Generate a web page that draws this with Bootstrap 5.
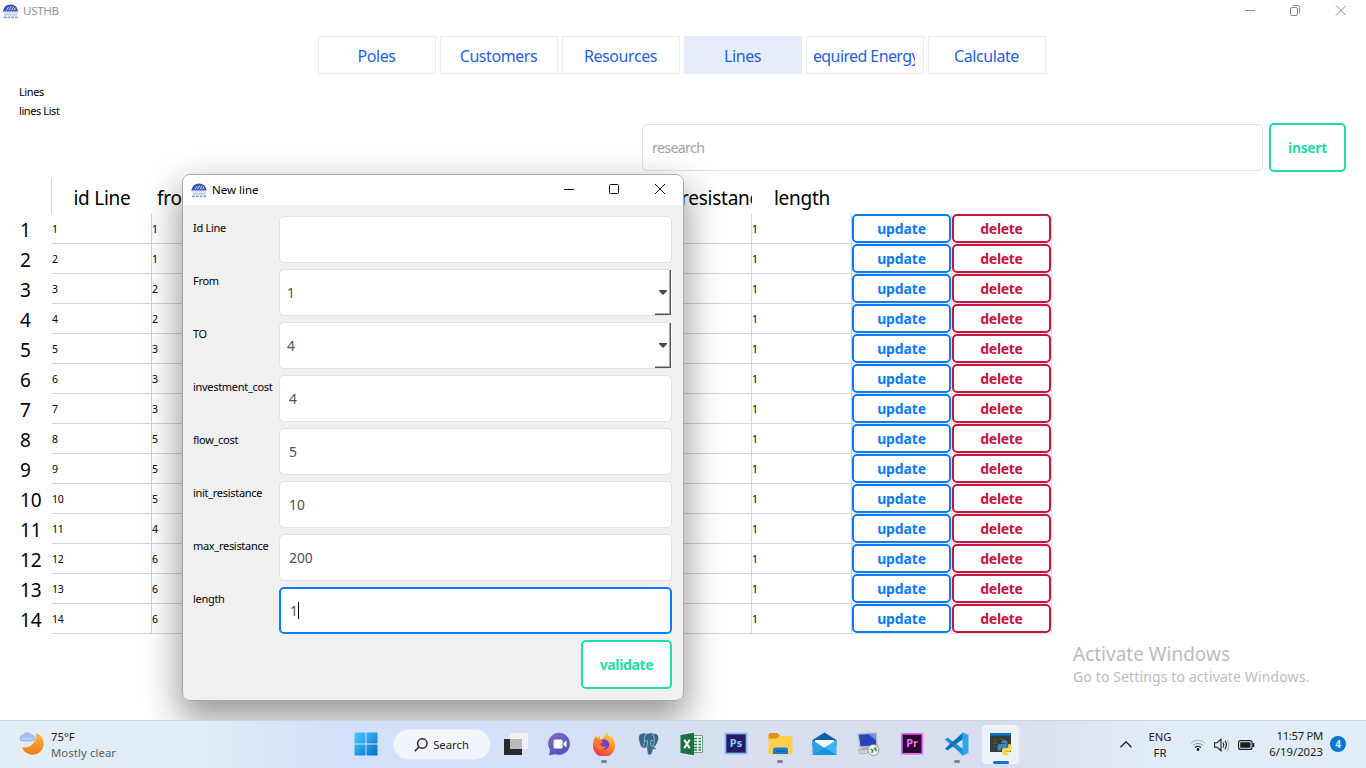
<!DOCTYPE html>
<html lang="en">
<head>
<meta charset="utf-8">
<title>USTHB</title>
<link href="https://cdn.jsdelivr.net/npm/bootstrap@5.3.0/dist/css/bootstrap.min.css" rel="stylesheet">
<style>
  body { width:1366px; height:768px; overflow:hidden; background:#fff; color:#000; font-family:"Noto Sans","Open Sans",sans-serif; font-size:11px; line-height:1.2; }
  svg { display:block; flex:none; }
  .app-title { height:22px; padding:0 20px 0 2px; color:#929292; font-size:11.6px; }
  .app-title span { letter-spacing:-.35px; }
  .tabs { gap:4px; margin-top:14px; padding-left:318px; }
  .tab-btn { width:118px; height:38px; padding:1px 8px 0 7px; border:1px solid #e5edfa; border-radius:0; color:#1f5fe0; font-size:16px; line-height:36px; background:#fff; }
  .tab-btn span { display:flex; justify-content:center; overflow:hidden; white-space:nowrap; letter-spacing:-.43px; }
  .tab-btn span.long { justify-content:flex-end; letter-spacing:-.6px; padding-right:0; }
  .tab-btn span.long b { font-weight:400; margin-right:-4px; }
  .tab-btn.active { background:#e5edfa; border-color:#e5edfa; color:#1f5fe0; }
  .crumbs { height:47px; padding:8px 0 0 19px; line-height:19px; font-size:11px; letter-spacing:-.42px; }
  .search-row { gap:6px; margin-top:2px; padding-right:20px; }
  .search-box { width:621px; height:47px; border:1px solid #e1e1ea; border-radius:5px; padding:0 9px; font-size:14.3px; letter-spacing:-.7px; color:#a3a3a6; background:#fff; }
  .btn-line { border:2px solid; border-radius:5px; background:#fff; font-weight:700; font-size:14px; padding:0; line-height:1; display:flex; align-items:center; justify-content:center; letter-spacing:-.35px; }
  .btn-green { color:#1edea8; border-color:#1edea8; height:49px; }
  .btn-up, .btn-del { width:99px; height:29px; letter-spacing:-.15px; }
  .btn-up { color:#0a7bff; border-color:#0a7bff; }
  .btn-del { color:#c6163f; border-color:#c6163f; letter-spacing:-.3px; }
  .grid-table { width:1052px; margin-top:6px; display:grid; grid-template-columns:52px repeat(10,100px); }
  .hd { height:36px; padding-top:4px; font-size:19px; letter-spacing:-.25px; display:flex; align-items:center; justify-content:center; overflow:hidden; white-space:nowrap; }
  .hd.corner { border-right:1px solid #d9d9d9; }
  .rh { height:30px; padding:2px 0 0 20px; font-size:19px; display:flex; align-items:center; }
  .td { height:30px; border-right:1px solid #d4d4d4; border-bottom:1px solid #d4d4d4; font-size:10.5px; display:flex; align-items:center; letter-spacing:-.2px; padding-top:1px; }
  .td.act { padding:0; border-color:#e6e0e4; }
  .dialog { position:absolute; left:182px; top:174px; width:502px; height:527px; border:1px solid #a9a9a9; border-radius:8px; background:#f0f0f0; overflow:hidden; }
  .dialog-shadow { position:absolute; left:182px; top:174px; width:502px; height:527px; border-radius:8px; box-shadow:0 16px 36px 3px rgba(0,0,0,.4); }
  .dialog-head { height:30px; background:#fff; padding:0 18px 0 8px; font-size:11.5px; }
  .dialog-head > svg { margin-top:-2px; }
  .form-line { display:grid; grid-template-columns:86px 393px; height:47px; margin-bottom:6px; }
  .form-line label { font-size:11px; letter-spacing:-.3px; padding-top:5px; line-height:14px; white-space:nowrap; }
  .fld { border:1px solid #e1e1ea; border-radius:5px; background:#fff; padding:0 9px; font-size:13.8px; color:#505050; display:flex; align-items:center; }
  .fld span { padding-top:2px; }
  .fld.sel { padding:0 0 0 7px; border-right:0; justify-content:space-between; }
  .drop { width:16px; height:45px; margin-right:1px; border-right:1px solid #555; border-bottom:1px solid #555; box-shadow:inset -1px -1px #aaa; display:flex; align-items:center; justify-content:center; }
  .fld.on { border:2px solid #0a7bff; }
  .caret { width:1px; height:17px; background:#000; }
  .watermark { position:absolute; left:1073px; top:642px; color:#bcbcbc; white-space:nowrap; }
  .watermark .big { font-size:19px; line-height:24px; letter-spacing:0; }
  .watermark .sm { font-size:14px; line-height:21px; letter-spacing:.13px; }
  .taskbar { position:absolute; left:0; top:720px; width:1366px; height:48px; border-top:1px solid #cbd6e0; background:linear-gradient(90deg,#e2edf6 0,#e1ecf7 200px,#d3e0f9 335px,#d4e0f7 560px,#d6dff0 700px,#d8deee 1000px,#dfe6f2 1090px,#e1ecf8 1150px,#e2edf8 100%); color:#1c1c1c; font-size:11.3px; }
  .pill { width:98px; height:31px; border-radius:16px; background:#f2f5fc; border:1px solid #e6ebf6; margin:0 3.5px 0 5px; }
  .tk { width:44.05px; height:47px; padding-bottom:1px; position:relative; display:flex; align-items:center; justify-content:center; }
  .tk.run::after { content:""; position:absolute; bottom:5px; width:6px; height:3px; border-radius:2px; background:#7d828b; }
  .tk.cur::before { content:""; position:absolute; left:3px; top:4px; width:35px; height:39px; background:#edf1f9; border:1px solid #f5f7fb; border-radius:4px; box-shadow:3px 0 0 #e6ebf5; }
  .tk.cur::after { content:""; position:absolute; bottom:4px; left:14px; width:16px; height:3px; border-radius:2px; background:#0078d4; }
  .tk svg { position:relative; }
  .note { width:16px; height:16px; border-radius:50%; background:#0078d4; color:#fff; font-size:10px; font-weight:600; }
</style>
</head>
<body class="position-relative">
<svg width="0" height="0" class="position-absolute">
  <symbol id="logo" viewBox="0 0 16 15">
    <path d="M.3 7.500Q1.500.6 8 .5t7.700 7z" fill="#3454b8"/>
    <path d="M3.800 6.300 6 3.200M6.400 6.300l2.400-4M9.200 6.300l1.800-3.600M11.800 6.300l.9-2.500" stroke="#fff" stroke-width=".8" fill="none"/>
    <path d="M1 9h14M1.500 10.900h13" stroke="#b4c1e4" stroke-width="1.200"/>
    <path d="M1 13.300h3M5 13.300h2.700M8.700 13.300h2.700M12.400 13.300h2.700" stroke="#8ea0d3" stroke-width="1.800"/>
  </symbol>
</svg>

<header class="app-title d-flex align-items-center justify-content-between">
  <div class="d-flex align-items-center gap-1"><svg width="17" height="15"><use href="#logo"/></svg><span>USTHB</span></div>
  <svg width="104" height="12" viewBox="0 0 104 12" fill="none" stroke="#888"><path d="M3 5.500h10"/><rect x="48.500" y="2.500" width="7" height="8" rx="1.500"/><path d="M50.500.5h5q2 0 2 2v6M94 .5l10 10M104 .5l-10 10"/></svg>
</header>

<nav class="tabs d-flex">
  <button class="tab-btn btn"><span>Poles</span></button>
  <button class="tab-btn btn"><span>Customers</span></button>
  <button class="tab-btn btn"><span>Resources</span></button>
  <button class="tab-btn btn active"><span>Lines</span></button>
  <button class="tab-btn btn"><span class="long"><b>Required Energy</b></span></button>
  <button class="tab-btn btn"><span>Calculate</span></button>
</nav>
<div class="crumbs"><div>Lines</div><div>lines List</div></div>

<div class="search-row d-flex justify-content-end align-items-center">
  <div class="search-box d-flex align-items-center">research</div>
  <button class="btn-line btn-green" style="width:77px">insert</button>
</div>

<main class="grid-table" id="lines"></main>

<div class="dialog-shadow"></div>
<section class="dialog">
  <div class="dialog-head d-flex align-items-center justify-content-between">
    <div class="d-flex align-items-center" style="gap:5px"><svg width="16" height="15"><use href="#logo"/></svg><span>New line</span></div>
    <svg width="102" height="12" viewBox="0 0 102 12" fill="none" stroke="#111"><path d="M1 6.500h10"/><rect x="46.500" y="1.500" width="9" height="9" rx="1"/><path d="M92 1l10 10M102 1l-10 10"/></svg>
  </div>
  <div id="form" style="padding:11px 0 0 10px"></div>
  <div class="d-flex justify-content-end" style="padding-right:11px"><button class="btn-line btn-green" style="width:91px">validate</button></div>
</section>

<div class="watermark"><div class="big">Activate Windows</div><div class="sm">Go to Settings to activate Windows.</div></div>

<footer class="taskbar d-flex align-items-center">
  <div class="d-flex align-items-center" style="width:343.500px;padding-left:19px;gap:8px">
    <svg width="25" height="24" viewBox="0 0 25 24" style="margin-top:-3px"><defs><linearGradient id="moon" x2="0" y2="1"><stop stop-color="#f9b947"/><stop offset="1" stop-color="#ed7d16"/></linearGradient></defs>
      <path d="M17 2A11.200 11.200 0 1 1 3 16.500Q11 17 14.500 12q3.500-5 2.500-10z" fill="url(#moon)"/><path d="M4 10a3 3 0 0 1 0-6 5 5 0 0 1 8.500 0 3 3 0 0 1 .5 6z" fill="#a5c1ef" stroke="#8eaee6" stroke-width=".7"/><path d="M3 8h11" stroke="#d2e1fa"/></svg>
    <div style="line-height:16px;margin-left:-1px"><div>75°F</div><div style="color:#5b6066;letter-spacing:.1px">Mostly clear</div></div>
  </div>
  <div class="tk"><svg width="24" height="24" viewBox="0 0 24 24"><defs><linearGradient id="win" x2="1" y2="1"><stop stop-color="#4cc9fa"/><stop offset="1" stop-color="#0070cc"/></linearGradient></defs><path d="M.5.500h11v11H.5zM12.500.500h11v11h-11zM.5 12.500h11v11H.5zM12.500 12.500h11v11h-11z" fill="url(#win)"/></svg></div>
  <div class="pill d-flex align-items-center justify-content-center" style="gap:5px">
    <svg width="14" height="14" viewBox="0 0 14 14" fill="none" stroke="#222" stroke-width="1.500"><circle cx="8.300" cy="5.500" r="4.700"/><path d="M5 9 .8 13.200"/></svg><span>Search</span></div>
  <div class="tk"><svg width="24" height="24" viewBox="0 0 24 24"><path d="M0 7h18v16H0z" fill="#292929"/><path d="M6 1h18v16H6z" fill="#f1f1f1"/><path d="M6 7h12v10H6z" fill="#bababa"/></svg></div>
  <div class="tk"><svg width="24" height="24" viewBox="0 0 24 24"><defs><linearGradient id="chat" x2=".6" y2="1"><stop stop-color="#8d68be"/><stop offset="1" stop-color="#4b52c0"/></linearGradient></defs><path d="M12 .8a11 11 0 1 1-4.500 21.400L1 23.300l1.200-5.200A11 11 0 0 1 12 .8z" fill="url(#chat)"/><rect x="5.500" y="7.500" width="9" height="9" rx="1.500" fill="#fff"/><path d="m15.500 11 3-2.500v7l-3-2.500z" fill="#fff"/></svg></div>
  <div class="tk run"><svg width="24" height="24" viewBox="0 0 24 24"><defs><linearGradient id="fox" x1=".8" x2=".3" y2="1"><stop stop-color="#ffe044"/><stop offset=".45" stop-color="#ff8b24"/><stop offset="1" stop-color="#f62b57"/></linearGradient></defs><path d="M3.500 4 5 6l3-2-.5 3.500 4-1.500Q12 3 15.500.5q.5 3 3 5l.5-1.500Q23.500 8 23 14a11 11 0 0 1-22 0Q.8 8 3.500 4z" fill="url(#fox)"/><circle cx="12.300" cy="12.500" r="5" fill="#7541c9"/><path d="M4 9q4-2 7 1l-3 2q2 4 6 2-2 5-7 3-4-3-3-8z" fill="#ff7a25"/></svg></div>
  <div class="tk"><svg width="24" height="24" viewBox="0 0 24 24"><path d="M5 1.500q3-1.300 6 0 4-1.300 7-.3 5 .2 4.800 5.300-.5 4.500-4 8.500l-.8.300 3 .7q-1 2-4 1.500-.5 5-3 5.700-3 .3-3-5.200l-.3-2.500-2 .8q-3.500.5-5-4.300Q.7 3 5 1.500z" fill="#376990" stroke="#e1e9ef" stroke-width=".7"/><path d="M10 2q-2.500 3-1.500 7l-1 5.500M16 1.500q4 5 1.500 12M9 9h2.500v4q0 2-2 2.500M15 8.500h2.200M15 8.500l-.5 4q.5 2 3 2" fill="none" stroke="#b9cfdd" stroke-width=".7"/></svg></div>
  <div class="tk"><svg width="24" height="24" viewBox="0 0 24 24"><path d="M12 3.500h10.500v17H12z" fill="#f6faf7" stroke="#6f9a80"/><path d="M14 6.500h3M18.500 6.500H21M14 9.500h3M18.500 9.500H21M14 12.500h3M18.500 12.500H21M14 15.500h3M18.500 15.500H21M14 18h3M18.500 18H21" stroke="#287a4a" stroke-width="1.500"/><path d="M.5 3 14 .8v22.400L.5 21z" fill="#1c7044"/><path d="m4.300 7.800 5.400 8.400M9.700 7.800l-5.400 8.400" stroke="#fff" stroke-width="2"/></svg></div>
  <div class="tk"><svg width="24" height="24" viewBox="0 0 24 24"><rect x="1.500" y="1.500" width="21" height="20" fill="#251c66" stroke="#84baf0" stroke-width="1.700"/><text x="12" y="15" text-anchor="middle" font-family="Noto Sans" font-weight="700" font-size="11" fill="#8fc7fb">Ps</text></svg></div>
  <div class="tk run"><svg width="25" height="24" viewBox="0 0 25 24"><path d="M.5 3q0-2 2-2h7l2.500 3v4H.5z" fill="#dc9815"/><path d="M.5 6.500H9L12 4h10.500q2 0 2 2v14.500q0 2-2 2h-20q-2 0-2-2z" fill="#ffd04d"/><path d="M5 22v-4q0-2.500 2.500-2.500h10Q20 15.500 20 18v4z" fill="#127ed0"/><path d="M8 19h9" stroke="#075aa3" stroke-width="1.200"/></svg></div>
  <div class="tk"><svg width="25" height="24" viewBox="0 0 25 24"><path d="M.5 8 12.500.5l12 7.500v6H.5z" fill="#0a61ae"/><path d="M3 8h19v8H3z" fill="#f6f7f9"/><path d="m.5 8 12 8L.5 23z" fill="#2d9fe4"/><path d="m24.500 8-12 7.500L.5 23h24z" fill="#38b6f1"/><path d="m.5 23 12-7.500 12 7.500z" fill="#1795df"/></svg></div>
  <div class="tk"><svg width="24" height="24" viewBox="0 0 24 24"><path d="m2 2 18-1 1 13-17 1z" fill="#2741bb" stroke="#b4bac8" stroke-width="1.500"/><path d="M12 1.800 19.500 1.500l.7 7z" fill="#7890df"/><path d="m8 15 6-.5 1 4-9 1-3-2z" fill="#aeb2bc"/><path d="m2 18 10-1 1 4-9 1z" fill="#ced0d5" stroke="#8f959f" stroke-width=".5"/><circle cx="17.500" cy="18" r="5.500" fill="#eee" stroke="#888" stroke-width=".8"/><path d="m14.500 17 2.300 1.500-1 2.500M20.500 15.500l-2 1.500 2.500 1.700" fill="none" stroke="#319136" stroke-width="1.400"/></svg></div>
  <div class="tk"><svg width="24" height="24" viewBox="0 0 24 24"><rect x="1.800" y="1.800" width="20.500" height="20" fill="#2b062f" stroke="#dd6bf4" stroke-width="1.700"/><text x="12" y="15" text-anchor="middle" font-family="Noto Sans" font-weight="700" font-size="11" fill="#e578fa">Pr</text></svg></div>
  <div class="tk run"><svg width="24" height="24" viewBox="0 0 24 24"><path d="M0 7.500 2.500 5.500 18 17v6.500z" fill="#1d8fd3"/><path d="m0 16.500 2.500 2L18 7V.5z" fill="#0c70b7"/><path d="m17.500.3 6 2.800v17.800l-6 2.800-1.500-1.500 1.500-1.200V3L16 1.800z" fill="#2fa6ec"/></svg></div>
  <div class="tk cur"><svg width="24" height="24" viewBox="0 0 24 24"><path d="M1 2h21v18H1z" fill="#343c3c"/><path d="M1 1h21v2.500H1z" fill="#0878d0"/><path d="M4 8h4M10 7h5M4 11h5M4 14h3" stroke="#41663f"/><path d="M13 8.500q5-1.500 5.500 1.500v4q0 2-2 2h-3q-2 0-2 2.500-3 1-3.200-2.500-.2-4 2.700-4h5v-.8H12z" fill="#4384b9"/><path d="M19.300 12q3.500-.5 3.700 3.500 0 4-2.500 4.300h-4v.8h3.200q.3 2.600-3 2.700-4 0-3.700-2.600v-3q.2-1.700 2-1.700h2.500q2 0 1.800-2z" fill="#ffd64e"/></svg></div>

  <div class="ms-auto d-flex align-items-center" style="padding-right:20px">
    <svg width="12" height="7" viewBox="0 0 12 7" fill="none" stroke="#1c1c1c" stroke-width="1.300"><path d="M.5 6.300 6 .8l5.500 5.500"/></svg>
    <div class="text-center" style="width:24px;margin:0 18px 0 16px;line-height:16px">ENG<br>FR</div>
    <svg width="16" height="12" viewBox="0 0 16 12" fill="none"><path d="M.7 4.300a10.300 10.300 0 0 1 14.600 0" stroke="#aeb6c0"/><path d="M3 6.500a7 7 0 0 1 10 0" stroke="#8f979f"/><path d="M5.200 8.500a4 4 0 0 1 5.600 0" stroke="#1c1c1c" stroke-width="1.300"/><circle cx="8" cy="10.500" r="1.400" fill="#1c1c1c"/></svg>
    <svg class="ms-2" width="16" height="14" viewBox="0 0 16 14" fill="none" stroke="#1c1c1c" stroke-width="1.100"><path d="M.6 4.700h2.600L7 1.300v11.400L3.200 9.300H.6zM9 4.500q1.600 2.500 0 5M11 2.800q2.800 4.200 0 8.400"/><path d="M13 1.200q4 5.800 0 11.600" stroke="#b1b8c0"/></svg>
    <svg style="margin-left:8px" width="17" height="10" viewBox="0 0 17 10"><rect x=".6" y=".6" width="13.500" height="8.800" rx="2" fill="none" stroke="#1c1c1c" stroke-width="1.100"/><rect x="2.200" y="2.200" width="10.300" height="5.600" rx=".6" fill="#1c1c1c"/><path d="M15.500 3v4" stroke="#1c1c1c" stroke-width="1.600"/></svg>
    <div class="text-end" style="width:68px;line-height:16px;margin-top:-1px"><span style="letter-spacing:-.3px">11:57 PM</span><br>6/19/2023</div>
    <span class="note d-flex align-items-center justify-content-center" style="margin-left:7px;margin-top:-1px">4</span>
  </div>
</footer>

<script>
  const heads = ['id Line', 'from', '', '', '', '', 'max_resistance', 'length', '', ''];
  const from = [1, 1, 2, 2, 3, 3, 3, 5, 5, 5, 4, 6, 6, 6];
  let html = '<div class="hd corner"></div>';
  heads.forEach((h, i) => html += '<div class="hd"' + (i === 1 ? ' style="justify-content:flex-start;padding-left:5px"' : '') + '>' + h + '</div>');
  from.forEach((f, i) => {
    html += '<div class="rh">' + (i + 1) + '</div>';
    [i + 1, f, '', '', '', '', '', 1].forEach(v => html += '<div class="td">' + v + '</div>');
    html += '<div class="td act"><button class="btn-line btn-up">update</button></div><div class="td act"><button class="btn-line btn-del">delete</button></div>';
  });
  document.getElementById('lines').innerHTML = html;

  const fields = [['Id Line', ''], ['From', '1', 'sel'], ['TO', '4', 'sel'], ['investment_cost', '4'], ['flow_cost', '5'], ['init_resistance', '10'], ['max_resistance', '200'], ['length', '1', 'on']];
  document.getElementById('form').innerHTML = fields.map(([l, v, k]) =>
    '<div class="form-line"><label>' + l + '</label><div class="fld ' + (k || '') + '"><span>' + v + '</span>' +
    (k === 'sel' ? '<i class="drop"><svg width="8" height="5"><path d="M0 0h8v1L4 5 0 1z" fill="#414b57"/></svg></i>' : k === 'on' ? '<i class="caret"></i>' : '') +
    '</div></div>').join('');
</script>
<script src="https://cdn.jsdelivr.net/npm/bootstrap@5.3.0/dist/js/bootstrap.bundle.min.js"></script>
</body>
</html>
